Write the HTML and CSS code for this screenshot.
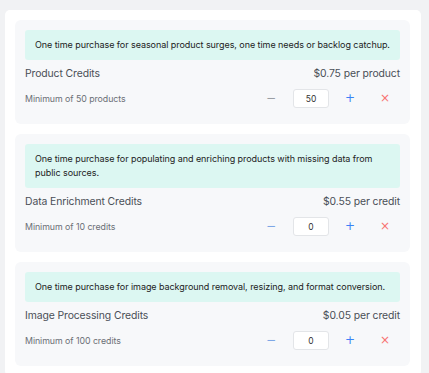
FILE: index.html
```html
<!DOCTYPE html>
<html>
<head>
    <title>Credits</title>
    <link rel="stylesheet" href="styles.css">
</head>
<body>
    <div class="panel">
        <div class="card">
            <div class="note">One time purchase for seasonal product surges, one time needs or backlog catchup.</div>
            <div class="head">
                <span class="name">Product Credits</span>
                <span class="price">$0.75 per product</span>
            </div>
            <div class="row">
                <span class="min">Minimum of 50 products</span>
                <div class="controls">
                    <button class="btn minus off">&minus;</button>
                    <input class="qty" type="text" value="50">
                    <button class="btn plus">+</button>
                    <button class="btn remove">&times;</button>
                </div>
            </div>
        </div>

        <div class="card">
            <div class="note">One time purchase for populating and enriching products with missing data from public sources.</div>
            <div class="head">
                <span class="name">Data Enrichment Credits</span>
                <span class="price">$0.55 per credit</span>
            </div>
            <div class="row">
                <span class="min">Minimum of 10 credits</span>
                <div class="controls">
                    <button class="btn minus">&minus;</button>
                    <input class="qty" type="text" value="0">
                    <button class="btn plus">+</button>
                    <button class="btn remove">&times;</button>
                </div>
            </div>
        </div>

        <div class="card">
            <div class="note">One time purchase for image background removal, resizing, and format conversion.</div>
            <div class="head">
                <span class="name">Image Processing Credits</span>
                <span class="price">$0.05 per credit</span>
            </div>
            <div class="row">
                <span class="min">Minimum of 100 credits</span>
                <div class="controls">
                    <button class="btn minus">&minus;</button>
                    <input class="qty" type="text" value="0">
                    <button class="btn plus">+</button>
                    <button class="btn remove">&times;</button>
                </div>
            </div>
        </div>
    </div>
</body>
</html>
```

FILE: styles.css
```css
body {
    font-family: Inter, "Liberation Sans", sans-serif;
    margin: 0;
    background-color: #f1f2f4;
    color: #333;
}
.panel {
    background-color: #fff;
    margin: 10px 8px 0 5px;
    padding: 10px 11px 10px 10px;
    border-radius: 5px;
    display: flex;
    flex-direction: column;
    gap: 10px;
}
.card {
    background-color: #f7f8fa;
    border-radius: 6px;
    padding: 10px 10px 16px 10px;
}
.note {
    background-color: #dcf7f2;
    border-radius: 3px;
    padding: 8px 5px 8px 10px;
    font-size: 9px;
    letter-spacing: -0.06px;
    line-height: 14px;
    color: #222;
}
.head {
    display: flex;
    justify-content: space-between;
    align-items: center;
    margin-top: 6px;
    font-size: 10.4px;
    letter-spacing: -0.1px;
    line-height: 16px;
    color: #4a4f57;
}
.row {
    display: flex;
    justify-content: space-between;
    align-items: center;
    margin-top: 7px;
}
.min {
    font-size: 8.8px;
    letter-spacing: -0.05px;
    color: #6b6f76;
}
.controls {
    display: flex;
    align-items: center;
    padding-right: 5px;
}
.btn {
    background: none;
    border: none;
    padding: 0;
    width: 20px;
    height: 19px;
    font-family: "DejaVu Sans", sans-serif;
    font-size: 12px;
    line-height: 19px;
    cursor: pointer;
}
.minus {
    color: #7ea7e6;
    margin-right: 12px;
}
.minus.off {
    color: #9a9ea4;
}
.plus {
    color: #3b82f6;
    margin-left: 11px;
}
.remove {
    color: #f87171;
    margin-left: 15px;
}
.qty {
    width: 36px;
    height: 19px;
    box-sizing: border-box;
    border: 1px solid #e3e5e8;
    border-radius: 3px;
    background-color: #fff;
    text-align: center;
    font-family: Inter, sans-serif;
    font-size: 8.5px;
    color: #333;
    padding: 0;
}
```
